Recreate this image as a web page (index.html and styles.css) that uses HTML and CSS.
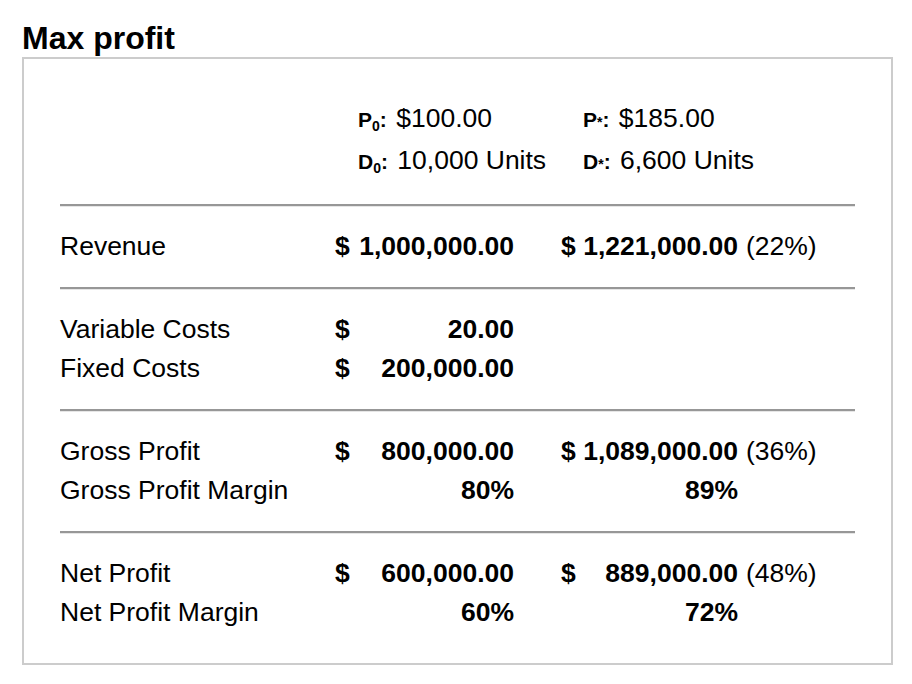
FILE: index.html
```html
<!DOCTYPE html>
<html lang="en">
<head>
<meta charset="utf-8">
<title>Max profit</title>
<link rel="stylesheet" href="styles.css">
</head>
<body>
<div class="page">
  <h1 class="title">Max profit</h1>
  <div class="card">
    <div class="grid header">
      <div class="hcell c1"><b class="sym">P<span class="sub">0</span>:</b> $100.00</div>
      <div class="hcell c2"><b class="sym">P<span class="star">*</span>:</b> $185.00</div>
      <div class="hcell c1"><b class="sym">D<span class="sub">0</span>:</b> 10,000 Units</div>
      <div class="hcell c2"><b class="sym">D<span class="star">*</span>:</b> 6,600 Units</div>
    </div>
    <hr class="rule">
    <div class="grid section">
      <div class="label">Revenue</div>
      <div class="cur">$</div>
      <div class="num">1,000,000.00</div>
      <div class="cur c2cur">$</div>
      <div class="num c2num">1,221,000.00</div>
      <div class="pct">(22%)</div>
    </div>
    <hr class="rule">
    <div class="grid section">
      <div class="label">Variable Costs</div>
      <div class="cur">$</div>
      <div class="num">20.00</div>
      <div class="label">Fixed Costs</div>
      <div class="cur">$</div>
      <div class="num">200,000.00</div>
    </div>
    <hr class="rule">
    <div class="grid section">
      <div class="label">Gross Profit</div>
      <div class="cur">$</div>
      <div class="num">800,000.00</div>
      <div class="cur c2cur">$</div>
      <div class="num c2num">1,089,000.00</div>
      <div class="pct">(36%)</div>
      <div class="label">Gross Profit Margin</div>
      <div class="num">80%</div>
      <div class="num c2num">89%</div>
    </div>
    <hr class="rule">
    <div class="grid section last">
      <div class="label">Net Profit</div>
      <div class="cur">$</div>
      <div class="num">600,000.00</div>
      <div class="cur c2cur">$</div>
      <div class="num c2num">889,000.00</div>
      <div class="pct">(48%)</div>
      <div class="label">Net Profit Margin</div>
      <div class="num">60%</div>
      <div class="num c2num">72%</div>
    </div>
  </div>
</div>
</body>
</html>
```
FILE: styles.css
```css
html, body {
  margin: 0;
  padding: 0;
  background: #fff;
}
body {
  font-family: "Liberation Sans", Arial, Helvetica, sans-serif;
  color: #000;
}
.page {
  padding: 20px 0 0 22px;
}
.title {
  margin: 0 0 1px 0;
  font-size: 32px;
  line-height: 36px;
  font-weight: bold;
}
.card {
  box-sizing: border-box;
  width: 871px;
  border: 2px solid #cccccc;
  padding: 38px 36px 10px 36px;
}
.grid {
  display: grid;
  grid-template-columns: 275px 23px 156px 47px 22px 155px auto;
  font-size: 26.5px;
}
.header {
  grid-auto-rows: 42px;
  line-height: 42px;
  margin-bottom: 23px;
}
.hcell {
  white-space: nowrap;
}
.hcell.c1 {
  grid-column: 3 / span 2;
}
.hcell.c2 {
  grid-column: 6 / span 2;
}
.sym {
  font-size: 21px;
  margin-right: 2px;
}
.sub {
  font-size: 14px;
  position: relative;
  top: 4px;
  line-height: 0;
}
.star {
  font-size: 14px;
  line-height: 0;
}
.rule {
  margin: 0;
  height: 0;
  border: 0;
  border-top: 2px solid #979797;
  border-bottom: 1px solid #e6e6e6;
}
.section {
  grid-auto-rows: 39px;
  line-height: 39px;
  padding: 20px 0 21px 0;
}
.label {
  grid-column: 1;
  white-space: nowrap;
}
.cur {
  grid-column: 2;
  font-weight: bold;
}
.num {
  grid-column: 3;
  text-align: right;
  font-weight: bold;
  white-space: nowrap;
}
.c2cur {
  grid-column: 5;
}
.c2num {
  grid-column: 6;
}
.pct {
  grid-column: 7;
  padding-left: 8px;
  white-space: nowrap;
}
```
